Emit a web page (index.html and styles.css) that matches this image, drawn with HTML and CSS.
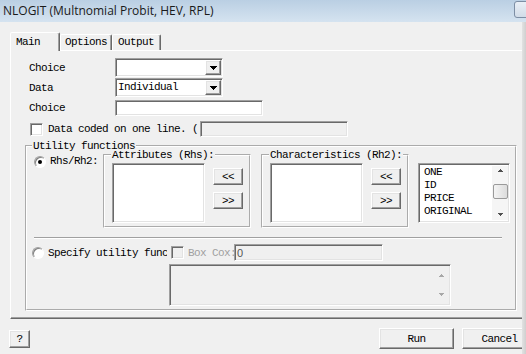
FILE: index.html
```html
<!DOCTYPE html>
<html>
<head>
<meta charset="utf-8">
<link rel="stylesheet" href="styles.css">
</head>
<body>
<div class="titlebar"><span class="title">NLOGIT (Multnomial Probit, HEV, RPL)</span><span class="tb-btn"></span></div>
<div class="window">
  <div class="client">
    <div class="tabs">
      <div class="tab active">Main</div>
      <div class="tab t-options">Options</div>
      <div class="tab t-output">Output</div>
    </div>
    <div class="panel">
      <div class="row r1">
        <span class="lbl">Choice</span>
        <div class="combo sunken"><span class="combo-val"></span><span class="combo-btn raised"><svg width="7" height="4" viewBox="0 0 7 4"><path d="M0 0h7v1H0zM1 1h5v1H1zM2 2h3v1H2zM3 3h1v1H3z" fill="#000"/></svg></span></div>
      </div>
      <div class="row r2">
        <span class="lbl">Data</span>
        <div class="combo sunken"><span class="combo-val">Individual</span><span class="combo-btn raised"><svg width="7" height="4" viewBox="0 0 7 4"><path d="M0 0h7v1H0zM1 1h5v1H1zM2 2h3v1H2zM3 3h1v1H3z" fill="#000"/></svg></span></div>
      </div>
      <div class="row r3">
        <span class="lbl">Choice</span>
        <div class="edit sunken e-choice"></div>
      </div>
      <div class="row r4">
        <span class="check sunken"></span>
        <span class="lbl-check">Data coded on one line. (</span>
        <div class="edit sunken disabled e-oneline"></div>
      </div>

      <div class="group outer">
        <div class="gtitle">Utility functions</div>
        <div class="rowA">
          <span class="radio"><span class="dot"></span></span>
          <span class="lbl-radio">Rhs/Rh2:</span>
          <div class="group inner g-attr">
            <div class="gtitle gt-inner">Attributes (Rhs):</div>
            <div class="inner-body">
              <div class="list sunken"></div>
              <div class="mv-btns">
                <div class="btn raised mv">&lt;&lt;</div>
                <div class="btn raised mv">&gt;&gt;</div>
              </div>
            </div>
          </div>
          <div class="group inner g-char">
            <div class="gtitle gt-inner">Characteristics (Rh2):</div>
            <div class="inner-body">
              <div class="list sunken"></div>
              <div class="mv-btns">
                <div class="btn raised mv">&lt;&lt;</div>
                <div class="btn raised mv">&gt;&gt;</div>
              </div>
            </div>
          </div>
          <div class="varlist sunken">
            <div class="items">
              <div class="item">ONE</div>
              <div class="item">ID</div>
              <div class="item">PRICE</div>
              <div class="item">ORIGINAL</div>
            </div>
            <div class="vscroll">
              <svg class="arr" width="5" height="3" viewBox="0 0 5 3"><path d="M2 0h1v1H2zM1 1h3v1H1zM0 2h5v1H0z" fill="#505050"/></svg>
              <div class="thumb"></div>
              <div class="spacer"></div>
              <svg class="arr" width="5" height="3" viewBox="0 0 5 3"><path d="M0 0h5v1H0zM1 1h3v1H1zM2 2h1v1H2z" fill="#505050"/></svg>
            </div>
          </div>
        </div>
        <div class="sep"></div>
        <div class="rowB">
          <span class="radio r-spec"></span>
          <span class="lbl-spec">Specify utility function</span>
          <span class="check sunken disabled c-box"></span>
          <span class="lbl-box">Box Cox:</span>
          <div class="edit sunken disabled e-box"><span class="zero">0</span></div>
        </div>
        <div class="memo sunken disabled">
          <div class="memo-body"></div>
          <div class="vscroll mscroll">
            <svg class="arr" width="5" height="3" viewBox="0 0 5 3"><path d="M2 0h1v1H2zM1 1h3v1H1zM0 2h5v1H0z" fill="#a8a8a8"/></svg>
            <div class="spacer"></div>
            <svg class="arr" width="5" height="3" viewBox="0 0 5 3"><path d="M0 0h5v1H0zM1 1h3v1H1zM2 2h1v1H2z" fill="#a8a8a8"/></svg>
          </div>
        </div>
      </div>
    </div>
    <div class="footer">
      <div class="btn raised qbtn">?</div>
      <div class="btn raised run">Run</div>
      <div class="btn raised cancel">Cancel</div>
    </div>
  </div>
  <div class="edge"></div>
</div>
</body>
</html>
```
FILE: styles.css
```css
* { box-sizing: border-box; }
html, body { margin: 0; padding: 0; }
body {
  width: 526px;
  height: 354px;
  overflow: hidden;
  background: #f0f0f0;
  font-family: "Liberation Mono", "DejaVu Sans Mono", monospace;
  font-size: 11px;
  letter-spacing: -0.6px;
  color: #000;
}

/* title bar */
.titlebar {
  height: 22px;
  display: flex;
  align-items: center;
  padding-left: 3px;
  overflow: hidden;
  background: linear-gradient(#bacfe3, #d5e3f0);
  font-family: "Open Sans", "Liberation Sans", Arial, sans-serif;
  font-size: 12px;
  letter-spacing: 0;
  color: #1a1a1a;
}
.title { padding-bottom: 2px; }
.tb-btn {
  margin-left: auto;
  margin-right: -8px;
  width: 20px;
  height: 17px;
  margin-top: -3px;
  border: 1px solid #7d8ea4;
  border-radius: 3px;
  background: linear-gradient(#e9eff6, #d2dce8);
}

.window { display: flex; height: 332px; }
.client {
  width: 522px;
  overflow: hidden;
  display: flex;
  flex-direction: column;
}
.edge {
  width: 4px;
  background: linear-gradient(to right, #e2e2e2, #cfcfcf);
}

/* tabs */
.tabs {
  display: flex;
  align-items: flex-end;
  margin-top: 10px;
  padding-left: 10px;
  height: 18px;
}
.tab {
  height: 16px;
  border: 1px solid;
  border-bottom: none;
  border-color: #fff #696969 transparent #fff;
  box-shadow: inset -1px 0 0 #a0a0a0;
  border-radius: 2px 2px 0 0;
  line-height: 14px;
  padding-left: 4px;
  background: #f0f0f0;
  white-space: nowrap;
}
.tab.active {
  width: 50px;
  height: 19px;
  margin-bottom: -1px;
  padding-left: 5px;
  padding-top: 2px;
  position: relative;
  z-index: 1;
}
.t-options { width: 52px; }
.t-output { width: 49px; padding-left: 5px; }

/* main panel */
.panel {
  margin-left: 10px;
  width: 530px;
  height: 269px;
  flex-shrink: 0;
  border-top: 1px solid #fff;
  border-left: 1px solid #fff;
  border-right: 1px solid #696969;
  border-bottom: 1px solid #696969;
  box-shadow: inset 0 -1px 0 #a0a0a0;
  padding: 7px 0 0 14px;
}

.sunken {
  border: 1px solid;
  border-color: #a0a0a0 #fff #fff #a0a0a0;
  box-shadow: inset 1px 1px 0 #696969, inset -1px -1px 0 #e3e3e3;
  background: #fff;
}
.raised {
  border: 1px solid;
  border-color: #fff #696969 #696969 #fff;
  box-shadow: inset -1px -1px 0 #a0a0a0, inset 1px 1px 0 #e3e3e3;
  background: #f0f0f0;
}
.disabled { background: #f0f0f0; }

.row {
  display: flex;
  align-items: center;
  margin-left: 4px;
  white-space: nowrap;
}
.r1 { height: 19px; }
.r2 { height: 19px; margin-top: 1px; }
.r3 { height: 16px; margin-top: 3px; }
.r4 { height: 16px; margin-top: 5px; }
.lbl { width: 86px; }

.combo {
  width: 108px;
  height: 19px;
  display: flex;
  padding: 1px;
}
.combo-val { flex: 1; padding-left: 1px; line-height: 15px; }
.combo-btn {
  width: 16px;
  height: 15px;
  display: flex;
  align-items: center;
  justify-content: center;
}
.combo-btn svg { display: block; }

.edit { height: 16px; }
.e-choice { width: 148px; }
.e-oneline { width: 148px; }

.check {
  width: 13px;
  height: 13px;
  margin-left: 1px;
  flex-shrink: 0;
}
.check.disabled { background: #f0f0f0; }
.lbl-check { margin-left: 5px; width: 152px; }

/* group boxes */
.group {
  border: 2px groove #fff;
  display: flex;
  flex-direction: column;
}
.gtitle {
  align-self: flex-start;
  height: 12px;
  line-height: 12px;
  margin: -7px 0 -5px 5px;
  padding: 0 1px;
  background: #f0f0f0;
  white-space: nowrap;
  position: relative;
}
.gt-inner { margin-left: 6px; }
.outer {
  margin-top: 8px;
  width: 492px;
  height: 166px;
}

.rowA {
  display: flex;
  align-items: flex-start;
  margin-top: 7px;
  height: 74px;
}
.radio {
  width: 12px;
  height: 12px;
  border-radius: 50%;
  border: 1px solid;
  border-color: #a0a0a0 #fff #fff #a0a0a0;
  box-shadow: inset 1px 1px 0 #808080;
  background: #fff;
  display: flex;
  align-items: center;
  justify-content: center;
  flex-shrink: 0;
}
.rowA .radio { margin-left: 7px; margin-top: 2px; }
.dot { width: 4px; height: 4px; border-radius: 50%; background: #000; }
.lbl-radio { margin-left: 4px; margin-top: 1px; line-height: 12px; width: 48px; }

.inner { width: 148px; height: 74px; }
.g-attr { margin-left: 5px; }
.g-char { margin-left: 10px; }
.inner-body { display: flex; padding: 7px 0 0 7px; }
.list { width: 93px; height: 60px; }
.mv-btns {
  display: flex;
  flex-direction: column;
  gap: 7px;
  margin-left: 8px;
  margin-top: 5px;
}
.btn {
  display: flex;
  align-items: center;
  justify-content: center;
  white-space: nowrap;
  flex-shrink: 0;
}
.mv { width: 30px; height: 17px; }

.varlist {
  margin-left: 9px;
  margin-top: 9px;
  width: 92px;
  height: 60px;
  display: flex;
  padding: 2px 1px 2px 2px;
}
.items { flex: 1; padding: 0 0 0 3px; }
.item { height: 13px; line-height: 13px; }
.vscroll {
  width: 16px;
  display: flex;
  flex-direction: column;
  align-items: center;
  background: #f5f5f5;
  padding: 3px 0 4px;
}
.vscroll .arr { display: block; flex-shrink: 0; }
.thumb {
  margin-top: 12px;
  width: 15px;
  height: 15px;
  border: 1px solid #9a9a9a;
  border-radius: 2px;
  background: linear-gradient(to right, #f4f4f4, #dcdcdc);
}
.spacer { flex: 1; }

.sep {
  margin-top: 9px;
  margin-left: 7px;
  width: 468px;
  height: 2px;
  border-top: 1px solid #a0a0a0;
  border-bottom: 1px solid #fff;
}

.rowB {
  display: flex;
  align-items: center;
  margin-top: 5px;
  height: 17px;
  white-space: nowrap;
}
.r-spec { margin-left: 5px; }
.lbl-spec { margin-left: 4px; width: 119px; overflow: hidden; }
.c-box { margin-left: 4px; }
.lbl-box { margin-left: 4px; width: 46px; color: #a0a0a0; }
.e-box {
  width: 149px;
  height: 17px;
  display: flex;
  align-items: center;
  padding-left: 2px;
}
.zero {
  font-family: "Liberation Sans", Arial, sans-serif;
  font-size: 11px;
  letter-spacing: 0;
  color: #555;
}

.memo {
  margin-top: 3px;
  margin-left: 142px;
  width: 282px;
  height: 42px;
  display: flex;
  padding: 2px 1px 2px 2px;
}
.memo-body { flex: 1; }
.mscroll { background: #f0f0f0; padding: 7px 0 7px; }

/* footer */
.footer {
  display: flex;
  align-items: flex-start;
  padding-top: 9px;
}
.qbtn { width: 21px; height: 18px; margin-left: 9px; margin-top: 2px; }
.run { width: 75px; height: 21px; margin-left: 349px; }
.cancel { width: 75px; height: 21px; margin-left: 8px; }
```
